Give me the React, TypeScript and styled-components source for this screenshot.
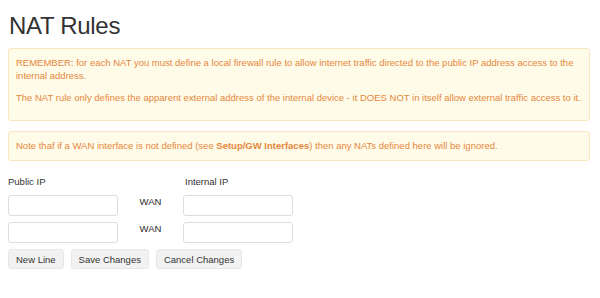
import { createGlobalStyle, styled } from "styled-components";

const GlobalStyle = createGlobalStyle`
    body {
        margin: 0;
        background: #fff;
        font-family: "Liberation Sans", Arial, sans-serif;
        color: #333;
    }
`;

const Page = styled.div`
    padding: 8px 10px 8px 8px;
`;

const Title = styled.h1`
    margin: 4px 0 8px 1px;
    font-size: 24px;
    letter-spacing: -0.3px;
    font-weight: 400;
    line-height: 28px;
    color: #333;
`;

const Alert = styled.div<{ $trail?: boolean }>`
    background: #fffbe9;
    border: 1px solid #fbe6c2;
    border-radius: 3px;
    padding: 7px 7px ${(p) => (p.$trail ? 7 : 8)}px;
    margin-bottom: 10px;
    color: #e5873c;
    font-size: 9.5px;
    line-height: 13px;

    p {
        margin: 0 0 ${(p) => (p.$trail ? 9 : 0)}px;
    }
    b {
        font-weight: 700;
    }
`;

const Form = styled.div`
    display: grid;
    grid-template-columns: 110px 65px 110px;
    row-gap: 6px;
    margin-top: 15px;
`;

const Label = styled.div<{ $indent?: number }>`
    font-size: 9.5px;
    line-height: 12px;
    padding-left: ${(p) => p.$indent ?? 0}px;
    margin-bottom: 1px;
`;

const Input = styled.input`
    box-sizing: border-box;
    width: 110px;
    height: 21px;
    border: 1px solid #ddd;
    border-radius: 3px;
    background: #fff;
    padding: 2px 6px;
    font: inherit;
    font-size: 10px;
`;

const Iface = styled.div`
    text-align: center;
    font-size: 9.5px;
    line-height: 12px;
    padding-top: 1px;
    color: #2a2a2a;
`;

const Buttons = styled.div`
    display: flex;
    gap: 7px;
    margin-top: 6px;
`;

const Button = styled.button`
    height: 20px;
    padding: 0 7px;
    border: 1px solid #e8e8e8;
    border-radius: 3px;
    background: #f2f2f2;
    color: #333;
    font-family: "Liberation Sans", Arial, sans-serif;
    font-size: 9.5px;
`;

const rows = [1, 2];

export default function App() {
    return (
        <Page>
            <GlobalStyle />
            <Title>NAT Rules</Title>
            <Alert $trail>
                <p>
                    REMEMBER: for each NAT you must define a local firewall rule to allow
                    internet traffic directed to the public IP address access to the
                    internal address.
                </p>
                <p>
                    The NAT rule only defines the apparent external address of the internal
                    device - it DOES NOT in itself allow external traffic access to it.
                </p>
            </Alert>
            <Alert>
                <p>
                    Note thaf if a WAN interface is not defined (see <b>Setup/GW Interfaces</b>)
                    then any NATs defined here will be ignored.
                </p>
            </Alert>
            <Form>
                <Label>Public IP</Label>
                <div />
                <Label $indent={2}>Internal IP</Label>
                {rows.map((r) => (
                    <>
                        <Input key={`p${r}`} />
                        <Iface key={`w${r}`}>WAN</Iface>
                        <Input key={`i${r}`} />
                    </>
                ))}
            </Form>
            <Buttons>
                <Button>New Line</Button>
                <Button>Save Changes</Button>
                <Button>Cancel Changes</Button>
            </Buttons>
        </Page>
    );
}
